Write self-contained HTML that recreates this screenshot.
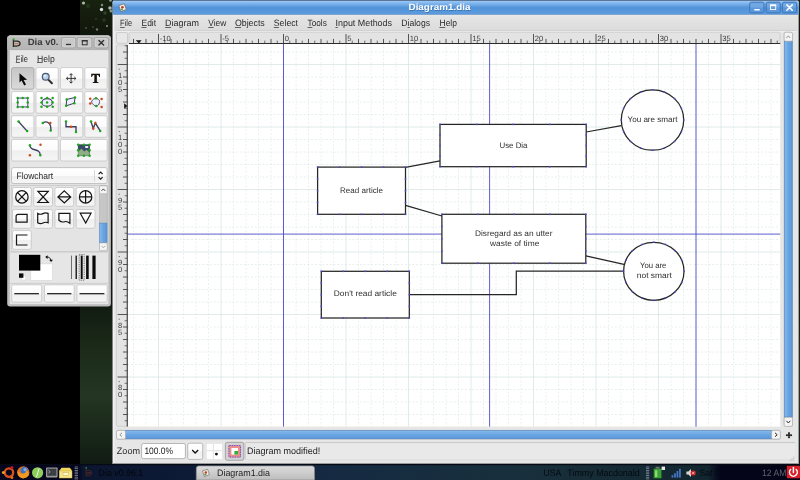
<!DOCTYPE html>
<html><head><meta charset="utf-8"><title>Dia</title>
<style>
html,body{margin:0;padding:0;background:#000;overflow:hidden;}
body{width:800px;height:480px;font-family:'Liberation Sans', sans-serif;}
svg{display:block;position:absolute;left:0;top:0;}
svg text{font-family:'Liberation Sans', sans-serif;}
</style></head><body>
<svg width="800" height="480" viewBox="0 0 800 480" text-rendering="geometricPrecision">
<defs>
<filter id="soft" x="0" y="0" width="800" height="480" filterUnits="userSpaceOnUse" color-interpolation-filters="sRGB"><feGaussianBlur stdDeviation="0.32"/></filter>
<linearGradient id="gTitle" x1="0" y1="0" x2="0" y2="1">
 <stop offset="0" stop-color="#5c7594"/><stop offset="0.055" stop-color="#5c7594"/>
 <stop offset="0.075" stop-color="#98c8f8"/><stop offset="0.3" stop-color="#74ace7"/>
 <stop offset="0.53" stop-color="#5092d8"/><stop offset="0.62" stop-color="#5596db"/>
 <stop offset="0.915" stop-color="#5a9add"/><stop offset="0.93" stop-color="#3b78be"/><stop offset="1" stop-color="#3b78be"/>
</linearGradient>
 <linearGradient id="gMenu" x1="0" y1="0" x2="0" y2="1">
 <stop offset="0" stop-color="#e9e9e9"/><stop offset="0.15" stop-color="#e4e4e4"/><stop offset="1" stop-color="#dcdcdc"/>
</linearGradient>
<linearGradient id="gTB" x1="0" y1="0" x2="0" y2="1">
 <stop offset="0" stop-color="#bebebe"/><stop offset="1" stop-color="#b6b6b6"/>
</linearGradient>
<linearGradient id="gBtn" x1="0" y1="0" x2="0" y2="1">
 <stop offset="0" stop-color="#ffffff"/><stop offset="0.5" stop-color="#fbfbfb"/>
 <stop offset="0.52" stop-color="#efefef"/><stop offset="1" stop-color="#f6f6f6"/>
</linearGradient>
<linearGradient id="gBtnSel" x1="0" y1="0" x2="0" y2="1">
 <stop offset="0" stop-color="#c6c6c6"/><stop offset="1" stop-color="#dadada"/>
</linearGradient>
<linearGradient id="gBlueH" x1="0" y1="0" x2="0" y2="1">
 <stop offset="0" stop-color="#86baec"/><stop offset="0.5" stop-color="#69a4e2"/><stop offset="1" stop-color="#5b99dc"/>
</linearGradient>
<linearGradient id="gBlueV" x1="0" y1="0" x2="1" y2="0">
 <stop offset="0" stop-color="#86baec"/><stop offset="0.5" stop-color="#69a4e2"/><stop offset="1" stop-color="#5b99dc"/>
</linearGradient>
<linearGradient id="gForest" x1="0" y1="0" x2="0" y2="1">
 <stop offset="0" stop-color="#18220f"/><stop offset="0.08" stop-color="#10160c"/>
 <stop offset="0.6" stop-color="#0c120c"/><stop offset="0.75" stop-color="#1c2b1a"/>
 <stop offset="0.85" stop-color="#243623"/><stop offset="1" stop-color="#101a12"/>
</linearGradient>
<linearGradient id="gTask" x1="0" y1="0" x2="1" y2="0">
 <stop offset="0" stop-color="#05061e"/><stop offset="0.098" stop-color="#05061e"/>
 <stop offset="0.104" stop-color="#0b1530"/><stop offset="0.24" stop-color="#0d1b36"/>
 <stop offset="0.4" stop-color="#152a42"/><stop offset="0.66" stop-color="#18303c"/>
 <stop offset="0.885" stop-color="#12262f"/><stop offset="0.9" stop-color="#05051a"/><stop offset="1" stop-color="#05051a"/>
</linearGradient>
<linearGradient id="gTaskBtn" x1="0" y1="0" x2="0" y2="1">
 <stop offset="0" stop-color="#dcdcdc"/><stop offset="1" stop-color="#bdbdbd"/>
</linearGradient>
</defs>
<g filter="url(#soft)">
<rect x="0" y="0" width="800" height="480" fill="#000"/>
<rect x="80" y="0" width="720" height="466" fill="url(#gForest)"/>
<circle cx="83.5" cy="3" r="1.6" fill="#cfe0d0" opacity="0.8"/>
<circle cx="101.5" cy="9.5" r="1.7" fill="#e8f0f4" opacity="0.9"/>
<circle cx="102" cy="5" r="1.2" fill="#a8c0b8" opacity="0.7"/>
<circle cx="110" cy="8" r="1.8" fill="#c8d8d8" opacity="0.8"/>
<circle cx="111" cy="11" r="1.5" fill="#b0c4c0" opacity="0.7"/>
<circle cx="107" cy="26" r="1.0" fill="#b8c8c0" opacity="0.7"/>
<circle cx="97" cy="29.5" r="1.2" fill="#a8b8ac" opacity="0.6"/>
<circle cx="86" cy="28" r="0.9" fill="#6c8068" opacity="0.6"/>
<circle cx="93" cy="27" r="1.0" fill="#506848" opacity="0.6"/>
<circle cx="105" cy="13" r="1.8" fill="#3a5230" opacity="0.7"/>
<circle cx="104" cy="20" r="1.8" fill="#30442a" opacity="0.7"/>
<circle cx="96" cy="19" r="1.0" fill="#3c5034" opacity="0.6"/>
<circle cx="88" cy="6" r="2.2" fill="#243a1c" opacity="0.8"/>
<circle cx="110.5" cy="0.5" r="1.3" fill="#c0d0d0" opacity="0.7"/>
<rect x="0" y="465" width="800" height="15" fill="url(#gTask)"/>
<rect x="0" y="464" width="800" height="1.2" fill="#050a14"/>
<path d="M112.5,463.8 V3 Q112.5,0 115.5,0 H795.8 Q798.8,0 798.8,3 V463.8 Z" fill="#e6e6e6"/>
<path d="M112.5,14.8 V3 Q112.5,0 115.5,0 H795.8 Q798.8,0 798.8,3 V14.8 Z" fill="url(#gTitle)"/>
<rect x="113.0" y="14.8" width="1.4" height="449.0" fill="#f2f2f2"/>
<rect x="112.0" y="3" width="1" height="460.8" fill="#7c7f84"/>
<rect x="798.0999999999999" y="14.6" width="0.9" height="449.2" fill="#9a9a9a"/>
<rect x="112.5" y="463.0" width="686.3" height="1" fill="#9a9a9a"/>
<g transform="translate(117.8,3)"><path d="M1,2.5 L6.5,0.8 L8.5,6.5 L3,8.6 Z" fill="#f2efe6" stroke="#6a665c" stroke-width="0.7"/><circle cx="4.6" cy="4.2" r="1.3" fill="#c0392b"/><rect x="3" y="5.6" width="2" height="1.6" fill="#5a8a4a"/></g>
<text x="408.5" y="10.4" font-size="9" fill="#2c5a94" font-weight="bold" textLength="62" lengthAdjust="spacingAndGlyphs" opacity="0.55" transform="translate(0.5,0.7)">Diagram1.dia</text>
<text x="408.5" y="10.4" font-size="9" fill="#ffffff" font-weight="bold" textLength="62" lengthAdjust="spacingAndGlyphs" >Diagram1.dia</text>
<rect x="749.7" y="2.2" width="14.299999999999955" height="10.600000000000001" rx="1.6" fill="#5a97dc" stroke="#3a6fb0" stroke-width="0.8"/>
<rect x="750.4000000000001" y="2.9000000000000004" width="12.899999999999954" height="4.6000000000000005" rx="1" fill="#8fbdee" opacity="0.45"/>
<rect x="766.2" y="2.2" width="14.099999999999909" height="10.600000000000001" rx="1.6" fill="#5a97dc" stroke="#3a6fb0" stroke-width="0.8"/>
<rect x="766.9000000000001" y="2.9000000000000004" width="12.699999999999909" height="4.6000000000000005" rx="1" fill="#8fbdee" opacity="0.45"/>
<rect x="782.4" y="2.2" width="14.200000000000045" height="10.600000000000001" rx="1.6" fill="#5a97dc" stroke="#3a6fb0" stroke-width="0.8"/>
<rect x="783.1" y="2.9000000000000004" width="12.800000000000045" height="4.6000000000000005" rx="1" fill="#8fbdee" opacity="0.45"/>
<rect x="754.3" y="9" width="5.4" height="1.5" fill="#fff"/>
<rect x="770.5" y="5" width="5.2" height="4.6" fill="none" stroke="#fff" stroke-width="0.9"/>
<rect x="770" y="4.5" width="6.2" height="1.6" fill="#fff"/>
<path d="M786.9,4.9 L792.2,10.2 M792.2,4.9 L786.9,10.2" stroke="#fff" stroke-width="1.6" stroke-linecap="round"/>
<rect x="114.4" y="14.8" width="683.5" height="15.7" fill="url(#gMenu)"/>
<rect x="115.5" y="30.4" width="680.3" height="0.6" fill="#c9c9c9"/>
<rect x="115.5" y="31" width="680.3" height="0.6" fill="#f6f6f6"/>
<text x="120.1" y="26.2" font-size="9.2" fill="#2a2a2a" textLength="11.9" lengthAdjust="spacingAndGlyphs" >File</text>
<rect x="120.1" y="27.2" width="4.6" height="0.7" fill="#2a2a2a"/>
<text x="141.5" y="26.2" font-size="9.2" fill="#2a2a2a" textLength="14.6" lengthAdjust="spacingAndGlyphs" >Edit</text>
<rect x="141.5" y="27.2" width="5.0" height="0.7" fill="#2a2a2a"/>
<text x="165.1" y="26.2" font-size="9.2" fill="#2a2a2a" textLength="33.8" lengthAdjust="spacingAndGlyphs" >Diagram</text>
<rect x="165.1" y="27.2" width="6.0" height="0.7" fill="#2a2a2a"/>
<text x="208.3" y="26.2" font-size="9.2" fill="#2a2a2a" textLength="18.0" lengthAdjust="spacingAndGlyphs" >View</text>
<rect x="208.3" y="27.2" width="5.3" height="0.7" fill="#2a2a2a"/>
<text x="234.9" y="26.2" font-size="9.2" fill="#2a2a2a" textLength="29.9" lengthAdjust="spacingAndGlyphs" >Objects</text>
<rect x="234.9" y="27.2" width="6.2" height="0.7" fill="#2a2a2a"/>
<text x="273.8" y="26.2" font-size="9.2" fill="#2a2a2a" textLength="24.2" lengthAdjust="spacingAndGlyphs" >Select</text>
<rect x="273.8" y="27.2" width="5.0" height="0.7" fill="#2a2a2a"/>
<text x="307.5" y="26.2" font-size="9.2" fill="#2a2a2a" textLength="19.3" lengthAdjust="spacingAndGlyphs" >Tools</text>
<rect x="307.5" y="27.2" width="4.8" height="0.7" fill="#2a2a2a"/>
<text x="335.5" y="26.2" font-size="9.2" fill="#2a2a2a" textLength="56.5" lengthAdjust="spacingAndGlyphs" >Input Methods</text>
<rect x="335.5" y="27.2" width="2.3" height="0.7" fill="#2a2a2a"/>
<text x="401.3" y="26.2" font-size="9.2" fill="#2a2a2a" textLength="28.7" lengthAdjust="spacingAndGlyphs" >Dialogs</text>
<rect x="407.6" y="27.2" width="2.2" height="0.7" fill="#2a2a2a"/>
<text x="439.5" y="26.2" font-size="9.2" fill="#2a2a2a" textLength="17.5" lengthAdjust="spacingAndGlyphs" >Help</text>
<rect x="439.5" y="27.2" width="5.8" height="0.7" fill="#2a2a2a"/>
<rect x="116.5" y="32.5" width="11" height="10.8" rx="1.4" fill="#e8e8e8" stroke="#c2c2c2" stroke-width="0.7"/>
<path d="M129,43.9 V34 Q129,32.2 131,32.2 H778 Q780.2,32.2 780.2,34 V43.9 Z" fill="#e3e3e3" stroke="#c4c4c4" stroke-width="0.6"/>
<path d="M127.8,45 H118.2 Q116.4,45 116.4,46.8 V424.6 Q116.4,426.4 118.2,426.4 H127.8 Z" fill="#e3e3e3" stroke="#c4c4c4" stroke-width="0.6"/>
<rect x="127.8" y="43.9" width="652.4000000000001" height="382.70000000000005" fill="#ffffff"/>
<g stroke="#d6e4e3" stroke-width="0.75" fill="none">
<path d="M133.50,43.9 V426.6" stroke-dasharray="1.9 1.85" stroke-dashoffset="0.9" stroke-opacity="0.75"/>
<path d="M146.00,43.9 V426.6" stroke-dasharray="1.9 1.85" stroke-dashoffset="0.9" stroke-opacity="0.75"/>
<path d="M158.50,43.9 V426.6"/>
<path d="M171.00,43.9 V426.6" stroke-dasharray="1.9 1.85" stroke-dashoffset="0.9" stroke-opacity="0.75"/>
<path d="M183.50,43.9 V426.6" stroke-dasharray="1.9 1.85" stroke-dashoffset="0.9" stroke-opacity="0.75"/>
<path d="M196.00,43.9 V426.6" stroke-dasharray="1.9 1.85" stroke-dashoffset="0.9" stroke-opacity="0.75"/>
<path d="M208.50,43.9 V426.6" stroke-dasharray="1.9 1.85" stroke-dashoffset="0.9" stroke-opacity="0.75"/>
<path d="M221.00,43.9 V426.6"/>
<path d="M233.50,43.9 V426.6" stroke-dasharray="1.9 1.85" stroke-dashoffset="0.9" stroke-opacity="0.75"/>
<path d="M246.00,43.9 V426.6" stroke-dasharray="1.9 1.85" stroke-dashoffset="0.9" stroke-opacity="0.75"/>
<path d="M258.50,43.9 V426.6" stroke-dasharray="1.9 1.85" stroke-dashoffset="0.9" stroke-opacity="0.75"/>
<path d="M271.00,43.9 V426.6" stroke-dasharray="1.9 1.85" stroke-dashoffset="0.9" stroke-opacity="0.75"/>
<path d="M283.50,43.9 V426.6"/>
<path d="M296.00,43.9 V426.6" stroke-dasharray="1.9 1.85" stroke-dashoffset="0.9" stroke-opacity="0.75"/>
<path d="M308.50,43.9 V426.6" stroke-dasharray="1.9 1.85" stroke-dashoffset="0.9" stroke-opacity="0.75"/>
<path d="M321.00,43.9 V426.6" stroke-dasharray="1.9 1.85" stroke-dashoffset="0.9" stroke-opacity="0.75"/>
<path d="M333.50,43.9 V426.6" stroke-dasharray="1.9 1.85" stroke-dashoffset="0.9" stroke-opacity="0.75"/>
<path d="M346.00,43.9 V426.6"/>
<path d="M358.50,43.9 V426.6" stroke-dasharray="1.9 1.85" stroke-dashoffset="0.9" stroke-opacity="0.75"/>
<path d="M371.00,43.9 V426.6" stroke-dasharray="1.9 1.85" stroke-dashoffset="0.9" stroke-opacity="0.75"/>
<path d="M383.50,43.9 V426.6" stroke-dasharray="1.9 1.85" stroke-dashoffset="0.9" stroke-opacity="0.75"/>
<path d="M396.00,43.9 V426.6" stroke-dasharray="1.9 1.85" stroke-dashoffset="0.9" stroke-opacity="0.75"/>
<path d="M408.50,43.9 V426.6"/>
<path d="M421.00,43.9 V426.6" stroke-dasharray="1.9 1.85" stroke-dashoffset="0.9" stroke-opacity="0.75"/>
<path d="M433.50,43.9 V426.6" stroke-dasharray="1.9 1.85" stroke-dashoffset="0.9" stroke-opacity="0.75"/>
<path d="M446.00,43.9 V426.6" stroke-dasharray="1.9 1.85" stroke-dashoffset="0.9" stroke-opacity="0.75"/>
<path d="M458.50,43.9 V426.6" stroke-dasharray="1.9 1.85" stroke-dashoffset="0.9" stroke-opacity="0.75"/>
<path d="M471.00,43.9 V426.6"/>
<path d="M483.50,43.9 V426.6" stroke-dasharray="1.9 1.85" stroke-dashoffset="0.9" stroke-opacity="0.75"/>
<path d="M496.00,43.9 V426.6" stroke-dasharray="1.9 1.85" stroke-dashoffset="0.9" stroke-opacity="0.75"/>
<path d="M508.50,43.9 V426.6" stroke-dasharray="1.9 1.85" stroke-dashoffset="0.9" stroke-opacity="0.75"/>
<path d="M521.00,43.9 V426.6" stroke-dasharray="1.9 1.85" stroke-dashoffset="0.9" stroke-opacity="0.75"/>
<path d="M533.50,43.9 V426.6"/>
<path d="M546.00,43.9 V426.6" stroke-dasharray="1.9 1.85" stroke-dashoffset="0.9" stroke-opacity="0.75"/>
<path d="M558.50,43.9 V426.6" stroke-dasharray="1.9 1.85" stroke-dashoffset="0.9" stroke-opacity="0.75"/>
<path d="M571.00,43.9 V426.6" stroke-dasharray="1.9 1.85" stroke-dashoffset="0.9" stroke-opacity="0.75"/>
<path d="M583.50,43.9 V426.6" stroke-dasharray="1.9 1.85" stroke-dashoffset="0.9" stroke-opacity="0.75"/>
<path d="M596.00,43.9 V426.6"/>
<path d="M608.50,43.9 V426.6" stroke-dasharray="1.9 1.85" stroke-dashoffset="0.9" stroke-opacity="0.75"/>
<path d="M621.00,43.9 V426.6" stroke-dasharray="1.9 1.85" stroke-dashoffset="0.9" stroke-opacity="0.75"/>
<path d="M633.50,43.9 V426.6" stroke-dasharray="1.9 1.85" stroke-dashoffset="0.9" stroke-opacity="0.75"/>
<path d="M646.00,43.9 V426.6" stroke-dasharray="1.9 1.85" stroke-dashoffset="0.9" stroke-opacity="0.75"/>
<path d="M658.50,43.9 V426.6"/>
<path d="M671.00,43.9 V426.6" stroke-dasharray="1.9 1.85" stroke-dashoffset="0.9" stroke-opacity="0.75"/>
<path d="M683.50,43.9 V426.6" stroke-dasharray="1.9 1.85" stroke-dashoffset="0.9" stroke-opacity="0.75"/>
<path d="M696.00,43.9 V426.6" stroke-dasharray="1.9 1.85" stroke-dashoffset="0.9" stroke-opacity="0.75"/>
<path d="M708.50,43.9 V426.6" stroke-dasharray="1.9 1.85" stroke-dashoffset="0.9" stroke-opacity="0.75"/>
<path d="M721.00,43.9 V426.6"/>
<path d="M733.50,43.9 V426.6" stroke-dasharray="1.9 1.85" stroke-dashoffset="0.9" stroke-opacity="0.75"/>
<path d="M746.00,43.9 V426.6" stroke-dasharray="1.9 1.85" stroke-dashoffset="0.9" stroke-opacity="0.75"/>
<path d="M758.50,43.9 V426.6" stroke-dasharray="1.9 1.85" stroke-dashoffset="0.9" stroke-opacity="0.75"/>
<path d="M771.00,43.9 V426.6" stroke-dasharray="1.9 1.85" stroke-dashoffset="0.9" stroke-opacity="0.75"/>
<path d="M127.8,52.00 H780.2" stroke-dasharray="1.9 1.85" stroke-dashoffset="0.4" stroke-opacity="0.8"/>
<path d="M127.8,64.50 H780.2"/>
<path d="M127.8,77.00 H780.2" stroke-dasharray="1.9 1.85" stroke-dashoffset="0.4" stroke-opacity="0.8"/>
<path d="M127.8,89.50 H780.2" stroke-dasharray="1.9 1.85" stroke-dashoffset="0.4" stroke-opacity="0.8"/>
<path d="M127.8,102.00 H780.2" stroke-dasharray="1.9 1.85" stroke-dashoffset="0.4" stroke-opacity="0.8"/>
<path d="M127.8,114.50 H780.2" stroke-dasharray="1.9 1.85" stroke-dashoffset="0.4" stroke-opacity="0.8"/>
<path d="M127.8,127.00 H780.2"/>
<path d="M127.8,139.50 H780.2" stroke-dasharray="1.9 1.85" stroke-dashoffset="0.4" stroke-opacity="0.8"/>
<path d="M127.8,152.00 H780.2" stroke-dasharray="1.9 1.85" stroke-dashoffset="0.4" stroke-opacity="0.8"/>
<path d="M127.8,164.50 H780.2" stroke-dasharray="1.9 1.85" stroke-dashoffset="0.4" stroke-opacity="0.8"/>
<path d="M127.8,177.00 H780.2" stroke-dasharray="1.9 1.85" stroke-dashoffset="0.4" stroke-opacity="0.8"/>
<path d="M127.8,189.50 H780.2"/>
<path d="M127.8,202.00 H780.2" stroke-dasharray="1.9 1.85" stroke-dashoffset="0.4" stroke-opacity="0.8"/>
<path d="M127.8,214.50 H780.2" stroke-dasharray="1.9 1.85" stroke-dashoffset="0.4" stroke-opacity="0.8"/>
<path d="M127.8,227.00 H780.2" stroke-dasharray="1.9 1.85" stroke-dashoffset="0.4" stroke-opacity="0.8"/>
<path d="M127.8,239.50 H780.2" stroke-dasharray="1.9 1.85" stroke-dashoffset="0.4" stroke-opacity="0.8"/>
<path d="M127.8,252.00 H780.2"/>
<path d="M127.8,264.50 H780.2" stroke-dasharray="1.9 1.85" stroke-dashoffset="0.4" stroke-opacity="0.8"/>
<path d="M127.8,277.00 H780.2" stroke-dasharray="1.9 1.85" stroke-dashoffset="0.4" stroke-opacity="0.8"/>
<path d="M127.8,289.50 H780.2" stroke-dasharray="1.9 1.85" stroke-dashoffset="0.4" stroke-opacity="0.8"/>
<path d="M127.8,302.00 H780.2" stroke-dasharray="1.9 1.85" stroke-dashoffset="0.4" stroke-opacity="0.8"/>
<path d="M127.8,314.50 H780.2"/>
<path d="M127.8,327.00 H780.2" stroke-dasharray="1.9 1.85" stroke-dashoffset="0.4" stroke-opacity="0.8"/>
<path d="M127.8,339.50 H780.2" stroke-dasharray="1.9 1.85" stroke-dashoffset="0.4" stroke-opacity="0.8"/>
<path d="M127.8,352.00 H780.2" stroke-dasharray="1.9 1.85" stroke-dashoffset="0.4" stroke-opacity="0.8"/>
<path d="M127.8,364.50 H780.2" stroke-dasharray="1.9 1.85" stroke-dashoffset="0.4" stroke-opacity="0.8"/>
<path d="M127.8,377.00 H780.2"/>
<path d="M127.8,389.50 H780.2" stroke-dasharray="1.9 1.85" stroke-dashoffset="0.4" stroke-opacity="0.8"/>
<path d="M127.8,402.00 H780.2" stroke-dasharray="1.9 1.85" stroke-dashoffset="0.4" stroke-opacity="0.8"/>
<path d="M127.8,414.50 H780.2" stroke-dasharray="1.9 1.85" stroke-dashoffset="0.4" stroke-opacity="0.8"/>
</g>
<g stroke="#4c4cc6" stroke-width="0.9">
<path d="M283.5,43.9 V426.6"/>
<path d="M489.6,43.9 V426.6"/>
<path d="M696.0,43.9 V426.6"/>
<path d="M127.8,234.1 H780.2"/>
</g>
<g stroke="#2e2e2e" stroke-width="0.8">
<path d="M133.50,38.9 V43.5"/>
<path d="M139.75,40.6 V43.5" stroke-opacity="0.8"/>
<path d="M146.00,38.9 V43.5"/>
<path d="M152.25,40.6 V43.5" stroke-opacity="0.8"/>
<path d="M158.50,34 V43.5"/>
<path d="M164.75,40.6 V43.5" stroke-opacity="0.8"/>
<path d="M171.00,38.9 V43.5"/>
<path d="M177.25,40.6 V43.5" stroke-opacity="0.8"/>
<path d="M183.50,38.9 V43.5"/>
<path d="M189.75,40.6 V43.5" stroke-opacity="0.8"/>
<path d="M196.00,38.9 V43.5"/>
<path d="M202.25,40.6 V43.5" stroke-opacity="0.8"/>
<path d="M208.50,38.9 V43.5"/>
<path d="M214.75,40.6 V43.5" stroke-opacity="0.8"/>
<path d="M221.00,34 V43.5"/>
<path d="M227.25,40.6 V43.5" stroke-opacity="0.8"/>
<path d="M233.50,38.9 V43.5"/>
<path d="M239.75,40.6 V43.5" stroke-opacity="0.8"/>
<path d="M246.00,38.9 V43.5"/>
<path d="M252.25,40.6 V43.5" stroke-opacity="0.8"/>
<path d="M258.50,38.9 V43.5"/>
<path d="M264.75,40.6 V43.5" stroke-opacity="0.8"/>
<path d="M271.00,38.9 V43.5"/>
<path d="M277.25,40.6 V43.5" stroke-opacity="0.8"/>
<path d="M283.50,34 V43.5"/>
<path d="M289.75,40.6 V43.5" stroke-opacity="0.8"/>
<path d="M296.00,38.9 V43.5"/>
<path d="M302.25,40.6 V43.5" stroke-opacity="0.8"/>
<path d="M308.50,38.9 V43.5"/>
<path d="M314.75,40.6 V43.5" stroke-opacity="0.8"/>
<path d="M321.00,38.9 V43.5"/>
<path d="M327.25,40.6 V43.5" stroke-opacity="0.8"/>
<path d="M333.50,38.9 V43.5"/>
<path d="M339.75,40.6 V43.5" stroke-opacity="0.8"/>
<path d="M346.00,34 V43.5"/>
<path d="M352.25,40.6 V43.5" stroke-opacity="0.8"/>
<path d="M358.50,38.9 V43.5"/>
<path d="M364.75,40.6 V43.5" stroke-opacity="0.8"/>
<path d="M371.00,38.9 V43.5"/>
<path d="M377.25,40.6 V43.5" stroke-opacity="0.8"/>
<path d="M383.50,38.9 V43.5"/>
<path d="M389.75,40.6 V43.5" stroke-opacity="0.8"/>
<path d="M396.00,38.9 V43.5"/>
<path d="M402.25,40.6 V43.5" stroke-opacity="0.8"/>
<path d="M408.50,34 V43.5"/>
<path d="M414.75,40.6 V43.5" stroke-opacity="0.8"/>
<path d="M421.00,38.9 V43.5"/>
<path d="M427.25,40.6 V43.5" stroke-opacity="0.8"/>
<path d="M433.50,38.9 V43.5"/>
<path d="M439.75,40.6 V43.5" stroke-opacity="0.8"/>
<path d="M446.00,38.9 V43.5"/>
<path d="M452.25,40.6 V43.5" stroke-opacity="0.8"/>
<path d="M458.50,38.9 V43.5"/>
<path d="M464.75,40.6 V43.5" stroke-opacity="0.8"/>
<path d="M471.00,34 V43.5"/>
<path d="M477.25,40.6 V43.5" stroke-opacity="0.8"/>
<path d="M483.50,38.9 V43.5"/>
<path d="M489.75,40.6 V43.5" stroke-opacity="0.8"/>
<path d="M496.00,38.9 V43.5"/>
<path d="M502.25,40.6 V43.5" stroke-opacity="0.8"/>
<path d="M508.50,38.9 V43.5"/>
<path d="M514.75,40.6 V43.5" stroke-opacity="0.8"/>
<path d="M521.00,38.9 V43.5"/>
<path d="M527.25,40.6 V43.5" stroke-opacity="0.8"/>
<path d="M533.50,34 V43.5"/>
<path d="M539.75,40.6 V43.5" stroke-opacity="0.8"/>
<path d="M546.00,38.9 V43.5"/>
<path d="M552.25,40.6 V43.5" stroke-opacity="0.8"/>
<path d="M558.50,38.9 V43.5"/>
<path d="M564.75,40.6 V43.5" stroke-opacity="0.8"/>
<path d="M571.00,38.9 V43.5"/>
<path d="M577.25,40.6 V43.5" stroke-opacity="0.8"/>
<path d="M583.50,38.9 V43.5"/>
<path d="M589.75,40.6 V43.5" stroke-opacity="0.8"/>
<path d="M596.00,34 V43.5"/>
<path d="M602.25,40.6 V43.5" stroke-opacity="0.8"/>
<path d="M608.50,38.9 V43.5"/>
<path d="M614.75,40.6 V43.5" stroke-opacity="0.8"/>
<path d="M621.00,38.9 V43.5"/>
<path d="M627.25,40.6 V43.5" stroke-opacity="0.8"/>
<path d="M633.50,38.9 V43.5"/>
<path d="M639.75,40.6 V43.5" stroke-opacity="0.8"/>
<path d="M646.00,38.9 V43.5"/>
<path d="M652.25,40.6 V43.5" stroke-opacity="0.8"/>
<path d="M658.50,34 V43.5"/>
<path d="M664.75,40.6 V43.5" stroke-opacity="0.8"/>
<path d="M671.00,38.9 V43.5"/>
<path d="M677.25,40.6 V43.5" stroke-opacity="0.8"/>
<path d="M683.50,38.9 V43.5"/>
<path d="M689.75,40.6 V43.5" stroke-opacity="0.8"/>
<path d="M696.00,38.9 V43.5"/>
<path d="M702.25,40.6 V43.5" stroke-opacity="0.8"/>
<path d="M708.50,38.9 V43.5"/>
<path d="M714.75,40.6 V43.5" stroke-opacity="0.8"/>
<path d="M721.00,34 V43.5"/>
<path d="M727.25,40.6 V43.5" stroke-opacity="0.8"/>
<path d="M733.50,38.9 V43.5"/>
<path d="M739.75,40.6 V43.5" stroke-opacity="0.8"/>
<path d="M746.00,38.9 V43.5"/>
<path d="M752.25,40.6 V43.5" stroke-opacity="0.8"/>
<path d="M758.50,38.9 V43.5"/>
<path d="M764.75,40.6 V43.5" stroke-opacity="0.8"/>
<path d="M771.00,38.9 V43.5"/>
<path d="M777.25,40.6 V43.5" stroke-opacity="0.8"/>
</g>
<rect x="129" y="43" width="651.2" height="1" fill="#2c2c2c"/>
<text x="159.8" y="41.0" font-size="7.6" fill="#3a3a3a" >-10</text>
<text x="222.3" y="41.0" font-size="7.6" fill="#3a3a3a" >-5</text>
<text x="284.8" y="41.0" font-size="7.6" fill="#3a3a3a" >0</text>
<text x="347.3" y="41.0" font-size="7.6" fill="#3a3a3a" >5</text>
<text x="409.8" y="41.0" font-size="7.6" fill="#3a3a3a" >10</text>
<text x="472.3" y="41.0" font-size="7.6" fill="#3a3a3a" >15</text>
<text x="534.8" y="41.0" font-size="7.6" fill="#3a3a3a" >20</text>
<text x="597.3" y="41.0" font-size="7.6" fill="#3a3a3a" >25</text>
<text x="659.8" y="41.0" font-size="7.6" fill="#3a3a3a" >30</text>
<text x="722.3" y="41.0" font-size="7.6" fill="#3a3a3a" >35</text>
<g stroke="#2e2e2e" stroke-width="0.8">
<path d="M124.6,45.75 H127.4" stroke-opacity="0.8"/>
<path d="M123,52.00 H127.4"/>
<path d="M124.6,58.25 H127.4" stroke-opacity="0.8"/>
<path d="M117.6,64.50 H127.4"/>
<path d="M124.6,70.75 H127.4" stroke-opacity="0.8"/>
<path d="M123,77.00 H127.4"/>
<path d="M124.6,83.25 H127.4" stroke-opacity="0.8"/>
<path d="M123,89.50 H127.4"/>
<path d="M124.6,95.75 H127.4" stroke-opacity="0.8"/>
<path d="M123,102.00 H127.4"/>
<path d="M124.6,108.25 H127.4" stroke-opacity="0.8"/>
<path d="M123,114.50 H127.4"/>
<path d="M124.6,120.75 H127.4" stroke-opacity="0.8"/>
<path d="M117.6,127.00 H127.4"/>
<path d="M124.6,133.25 H127.4" stroke-opacity="0.8"/>
<path d="M123,139.50 H127.4"/>
<path d="M124.6,145.75 H127.4" stroke-opacity="0.8"/>
<path d="M123,152.00 H127.4"/>
<path d="M124.6,158.25 H127.4" stroke-opacity="0.8"/>
<path d="M123,164.50 H127.4"/>
<path d="M124.6,170.75 H127.4" stroke-opacity="0.8"/>
<path d="M123,177.00 H127.4"/>
<path d="M124.6,183.25 H127.4" stroke-opacity="0.8"/>
<path d="M117.6,189.50 H127.4"/>
<path d="M124.6,195.75 H127.4" stroke-opacity="0.8"/>
<path d="M123,202.00 H127.4"/>
<path d="M124.6,208.25 H127.4" stroke-opacity="0.8"/>
<path d="M123,214.50 H127.4"/>
<path d="M124.6,220.75 H127.4" stroke-opacity="0.8"/>
<path d="M123,227.00 H127.4"/>
<path d="M124.6,233.25 H127.4" stroke-opacity="0.8"/>
<path d="M123,239.50 H127.4"/>
<path d="M124.6,245.75 H127.4" stroke-opacity="0.8"/>
<path d="M117.6,252.00 H127.4"/>
<path d="M124.6,258.25 H127.4" stroke-opacity="0.8"/>
<path d="M123,264.50 H127.4"/>
<path d="M124.6,270.75 H127.4" stroke-opacity="0.8"/>
<path d="M123,277.00 H127.4"/>
<path d="M124.6,283.25 H127.4" stroke-opacity="0.8"/>
<path d="M123,289.50 H127.4"/>
<path d="M124.6,295.75 H127.4" stroke-opacity="0.8"/>
<path d="M123,302.00 H127.4"/>
<path d="M124.6,308.25 H127.4" stroke-opacity="0.8"/>
<path d="M117.6,314.50 H127.4"/>
<path d="M124.6,320.75 H127.4" stroke-opacity="0.8"/>
<path d="M123,327.00 H127.4"/>
<path d="M124.6,333.25 H127.4" stroke-opacity="0.8"/>
<path d="M123,339.50 H127.4"/>
<path d="M124.6,345.75 H127.4" stroke-opacity="0.8"/>
<path d="M123,352.00 H127.4"/>
<path d="M124.6,358.25 H127.4" stroke-opacity="0.8"/>
<path d="M123,364.50 H127.4"/>
<path d="M124.6,370.75 H127.4" stroke-opacity="0.8"/>
<path d="M117.6,377.00 H127.4"/>
<path d="M124.6,383.25 H127.4" stroke-opacity="0.8"/>
<path d="M123,389.50 H127.4"/>
<path d="M124.6,395.75 H127.4" stroke-opacity="0.8"/>
<path d="M123,402.00 H127.4"/>
<path d="M124.6,408.25 H127.4" stroke-opacity="0.8"/>
<path d="M123,414.50 H127.4"/>
<path d="M124.6,420.75 H127.4" stroke-opacity="0.8"/>
</g>
<rect x="126.7" y="45" width="1.1" height="381.5" fill="#3a3a3a"/>
<rect x="118.7" y="68.70" width="1" height="0.9" fill="#444"/>
<text x="118.1" y="77.9" font-size="7.6" fill="#3a3a3a" >1</text>
<text x="118.1" y="84.9" font-size="7.6" fill="#3a3a3a" >0</text>
<text x="118.1" y="91.9" font-size="7.6" fill="#3a3a3a" >5</text>
<rect x="118.7" y="131.20" width="1" height="0.9" fill="#444"/>
<text x="118.1" y="140.4" font-size="7.6" fill="#3a3a3a" >1</text>
<text x="118.1" y="147.4" font-size="7.6" fill="#3a3a3a" >0</text>
<text x="118.1" y="154.4" font-size="7.6" fill="#3a3a3a" >0</text>
<rect x="118.7" y="193.70" width="1" height="0.9" fill="#444"/>
<text x="118.1" y="202.9" font-size="7.6" fill="#3a3a3a" >9</text>
<text x="118.1" y="209.9" font-size="7.6" fill="#3a3a3a" >5</text>
<rect x="118.7" y="256.20" width="1" height="0.9" fill="#444"/>
<text x="118.1" y="265.4" font-size="7.6" fill="#3a3a3a" >9</text>
<text x="118.1" y="272.4" font-size="7.6" fill="#3a3a3a" >0</text>
<rect x="118.7" y="318.70" width="1" height="0.9" fill="#444"/>
<text x="118.1" y="327.9" font-size="7.6" fill="#3a3a3a" >8</text>
<text x="118.1" y="334.9" font-size="7.6" fill="#3a3a3a" >5</text>
<rect x="118.7" y="381.20" width="1" height="0.9" fill="#444"/>
<text x="118.1" y="390.4" font-size="7.6" fill="#3a3a3a" >8</text>
<text x="118.1" y="397.4" font-size="7.6" fill="#3a3a3a" >0</text>
<path d="M135.8,40.2 H141.6 L138.7,43.3 Z" fill="#111"/>
<path d="M124.2,103.2 V108.8 L127.3,106 Z" fill="#111"/>
<g fill="#ffffff" stroke="#262626" stroke-width="1.25" stroke-linejoin="miter">
<path d="M405.5,167.3 L440,160.8" fill="none"/>
<path d="M405.5,205.3 L441.9,216" fill="none"/>
<path d="M586.2,132 L621.3,125.7" fill="none"/>
<path d="M585.8,255.8 L624,264.4" fill="none"/>
<path d="M409.3,294.7 H516.3 V271 H623.5" fill="none"/>
<rect x="440" y="124.4" width="146.2" height="42.3"/>
<rect x="317.6" y="167.1" width="87.9" height="47.2"/>
<rect x="441.9" y="214.3" width="143.9" height="48.9"/>
<rect x="321.3" y="271.3" width="88" height="46.7"/>
<ellipse cx="652.5" cy="120" rx="31.2" ry="30.2"/>
<ellipse cx="653.8" cy="271.25" rx="30.2" ry="29"/>
</g>
<g fill="#4a4ae0" opacity="0.9">
<rect x="439.20" y="123.60" width="1.6" height="1.6"/>
<rect x="439.20" y="165.90" width="1.6" height="1.6"/>
<rect x="475.75" y="123.60" width="1.6" height="1.6"/>
<rect x="475.75" y="165.90" width="1.6" height="1.6"/>
<rect x="512.30" y="123.60" width="1.6" height="1.6"/>
<rect x="512.30" y="165.90" width="1.6" height="1.6"/>
<rect x="548.85" y="123.60" width="1.6" height="1.6"/>
<rect x="548.85" y="165.90" width="1.6" height="1.6"/>
<rect x="585.40" y="123.60" width="1.6" height="1.6"/>
<rect x="585.40" y="165.90" width="1.6" height="1.6"/>
<rect x="439.20" y="134.17" width="1.6" height="1.6"/>
<rect x="585.40" y="134.17" width="1.6" height="1.6"/>
<rect x="439.20" y="144.75" width="1.6" height="1.6"/>
<rect x="585.40" y="144.75" width="1.6" height="1.6"/>
<rect x="439.20" y="155.32" width="1.6" height="1.6"/>
<rect x="585.40" y="155.32" width="1.6" height="1.6"/>
<rect x="316.80" y="166.30" width="1.6" height="1.6"/>
<rect x="316.80" y="213.50" width="1.6" height="1.6"/>
<rect x="338.78" y="166.30" width="1.6" height="1.6"/>
<rect x="338.78" y="213.50" width="1.6" height="1.6"/>
<rect x="360.75" y="166.30" width="1.6" height="1.6"/>
<rect x="360.75" y="213.50" width="1.6" height="1.6"/>
<rect x="382.73" y="166.30" width="1.6" height="1.6"/>
<rect x="382.73" y="213.50" width="1.6" height="1.6"/>
<rect x="404.70" y="166.30" width="1.6" height="1.6"/>
<rect x="404.70" y="213.50" width="1.6" height="1.6"/>
<rect x="316.80" y="178.10" width="1.6" height="1.6"/>
<rect x="404.70" y="178.10" width="1.6" height="1.6"/>
<rect x="316.80" y="189.90" width="1.6" height="1.6"/>
<rect x="404.70" y="189.90" width="1.6" height="1.6"/>
<rect x="316.80" y="201.70" width="1.6" height="1.6"/>
<rect x="404.70" y="201.70" width="1.6" height="1.6"/>
<rect x="441.10" y="213.50" width="1.6" height="1.6"/>
<rect x="441.10" y="262.40" width="1.6" height="1.6"/>
<rect x="477.07" y="213.50" width="1.6" height="1.6"/>
<rect x="477.07" y="262.40" width="1.6" height="1.6"/>
<rect x="513.05" y="213.50" width="1.6" height="1.6"/>
<rect x="513.05" y="262.40" width="1.6" height="1.6"/>
<rect x="549.03" y="213.50" width="1.6" height="1.6"/>
<rect x="549.03" y="262.40" width="1.6" height="1.6"/>
<rect x="585.00" y="213.50" width="1.6" height="1.6"/>
<rect x="585.00" y="262.40" width="1.6" height="1.6"/>
<rect x="441.10" y="225.72" width="1.6" height="1.6"/>
<rect x="585.00" y="225.72" width="1.6" height="1.6"/>
<rect x="441.10" y="237.95" width="1.6" height="1.6"/>
<rect x="585.00" y="237.95" width="1.6" height="1.6"/>
<rect x="441.10" y="250.18" width="1.6" height="1.6"/>
<rect x="585.00" y="250.18" width="1.6" height="1.6"/>
<rect x="320.50" y="270.50" width="1.6" height="1.6"/>
<rect x="320.50" y="317.20" width="1.6" height="1.6"/>
<rect x="342.50" y="270.50" width="1.6" height="1.6"/>
<rect x="342.50" y="317.20" width="1.6" height="1.6"/>
<rect x="364.50" y="270.50" width="1.6" height="1.6"/>
<rect x="364.50" y="317.20" width="1.6" height="1.6"/>
<rect x="386.50" y="270.50" width="1.6" height="1.6"/>
<rect x="386.50" y="317.20" width="1.6" height="1.6"/>
<rect x="408.50" y="270.50" width="1.6" height="1.6"/>
<rect x="408.50" y="317.20" width="1.6" height="1.6"/>
<rect x="320.50" y="282.18" width="1.6" height="1.6"/>
<rect x="408.50" y="282.18" width="1.6" height="1.6"/>
<rect x="320.50" y="293.85" width="1.6" height="1.6"/>
<rect x="408.50" y="293.85" width="1.6" height="1.6"/>
<rect x="320.50" y="305.53" width="1.6" height="1.6"/>
<rect x="408.50" y="305.53" width="1.6" height="1.6"/>
<rect x="682.90" y="119.20" width="1.6" height="1.6"/>
<rect x="680.53" y="130.76" width="1.6" height="1.6"/>
<rect x="673.76" y="140.55" width="1.6" height="1.6"/>
<rect x="663.64" y="147.10" width="1.6" height="1.6"/>
<rect x="651.70" y="149.40" width="1.6" height="1.6"/>
<rect x="639.76" y="147.10" width="1.6" height="1.6"/>
<rect x="629.64" y="140.55" width="1.6" height="1.6"/>
<rect x="622.87" y="130.76" width="1.6" height="1.6"/>
<rect x="620.50" y="119.20" width="1.6" height="1.6"/>
<rect x="622.87" y="107.64" width="1.6" height="1.6"/>
<rect x="629.64" y="97.85" width="1.6" height="1.6"/>
<rect x="639.76" y="91.30" width="1.6" height="1.6"/>
<rect x="651.70" y="89.00" width="1.6" height="1.6"/>
<rect x="663.64" y="91.30" width="1.6" height="1.6"/>
<rect x="673.76" y="97.85" width="1.6" height="1.6"/>
<rect x="680.53" y="107.64" width="1.6" height="1.6"/>
<rect x="683.20" y="270.45" width="1.6" height="1.6"/>
<rect x="680.90" y="281.55" width="1.6" height="1.6"/>
<rect x="674.35" y="290.96" width="1.6" height="1.6"/>
<rect x="664.56" y="297.24" width="1.6" height="1.6"/>
<rect x="653.00" y="299.45" width="1.6" height="1.6"/>
<rect x="641.44" y="297.24" width="1.6" height="1.6"/>
<rect x="631.65" y="290.96" width="1.6" height="1.6"/>
<rect x="625.10" y="281.55" width="1.6" height="1.6"/>
<rect x="622.80" y="270.45" width="1.6" height="1.6"/>
<rect x="625.10" y="259.35" width="1.6" height="1.6"/>
<rect x="631.65" y="249.94" width="1.6" height="1.6"/>
<rect x="641.44" y="243.66" width="1.6" height="1.6"/>
<rect x="653.00" y="241.45" width="1.6" height="1.6"/>
<rect x="664.56" y="243.66" width="1.6" height="1.6"/>
<rect x="674.35" y="249.94" width="1.6" height="1.6"/>
<rect x="680.90" y="259.35" width="1.6" height="1.6"/>
</g>
<text x="499.5" y="147.6" font-size="8" fill="#2e2e2e" textLength="28" lengthAdjust="spacingAndGlyphs" >Use Dia</text>
<text x="340" y="192.6" font-size="8" fill="#2e2e2e" textLength="43" lengthAdjust="spacingAndGlyphs" >Read article</text>
<text x="475" y="235.8" font-size="8" fill="#2e2e2e" textLength="77.5" lengthAdjust="spacingAndGlyphs" >Disregard as an utter</text>
<text x="490" y="245.6" font-size="8" fill="#2e2e2e" textLength="49.3" lengthAdjust="spacingAndGlyphs" >waste of time</text>
<text x="333.8" y="296.4" font-size="8" fill="#2e2e2e" textLength="63" lengthAdjust="spacingAndGlyphs" >Don't read article</text>
<text x="627.5" y="121.8" font-size="8" fill="#2e2e2e" textLength="50" lengthAdjust="spacingAndGlyphs" >You are smart</text>
<text x="640" y="267.6" font-size="8" fill="#2e2e2e" textLength="26.3" lengthAdjust="spacingAndGlyphs" >You are</text>
<text x="636.8" y="277.6" font-size="8" fill="#2e2e2e" textLength="35" lengthAdjust="spacingAndGlyphs" >not smart</text>
<rect x="784.2" y="32.3" width="8.3" height="394.2" rx="1.5" fill="#cfcfcf" stroke="#a9a9a9" stroke-width="0.6"/>
<rect x="784.5" y="41.3" width="7.7" height="375.6" fill="url(#gBlueV)" stroke="#4a83c4" stroke-width="0.6"/>
<rect x="784.2" y="32.3" width="8.3" height="8.9" rx="1.5" fill="#f4f4f4" stroke="#a9a9a9" stroke-width="0.6"/>
<rect x="784.2" y="417.4" width="8.3" height="9" rx="1.5" fill="#f4f4f4" stroke="#a9a9a9" stroke-width="0.6"/>
<path d="M786.4,38 L788.35,35.8 L790.3,38" fill="none" stroke="#8a8a8a" stroke-width="0.9"/>
<path d="M786.4,420.8 L788.35,423 L790.3,420.8" fill="none" stroke="#2a2a2a" stroke-width="1"/>
<rect x="116.5" y="430.4" width="663.8" height="8.7" rx="1.5" fill="#cfcfcf" stroke="#a9a9a9" stroke-width="0.6"/>
<rect x="125.6" y="430.7" width="646" height="8.1" fill="url(#gBlueH)" stroke="#4a83c4" stroke-width="0.6"/>
<rect x="116.5" y="430.4" width="9" height="8.7" rx="1.5" fill="#f4f4f4" stroke="#a9a9a9" stroke-width="0.6"/>
<rect x="771.6" y="430.4" width="8.7" height="8.7" rx="1.5" fill="#f4f4f4" stroke="#a9a9a9" stroke-width="0.6"/>
<path d="M122,432.8 L119.8,434.75 L122,436.7" fill="none" stroke="#8a8a8a" stroke-width="0.9"/>
<path d="M775,432.8 L777.2,434.75 L775,436.7" fill="none" stroke="#2a2a2a" stroke-width="1"/>
<g fill="#111" stroke="#111" stroke-width="0.9"><path d="M786.4,435.2 H791.6 M789,432.6 V437.8" fill="none" stroke-width="1.3"/><path d="M789,431.9 L790.2,433.4 H787.8 Z M789,438.5 L790.2,437 H787.8 Z M785.7,435.2 L787.2,434 V436.4 Z M792.3,435.2 L790.8,434 V436.4 Z" stroke="none"/></g>
<text x="116.8" y="454.2" font-size="9.3" fill="#2a2a2a" textLength="23.2" lengthAdjust="spacingAndGlyphs" >Zoom</text>
<rect x="141.6" y="443.5" width="43.8" height="15.1" rx="1.8" fill="#ffffff" stroke="#9c9c9c" stroke-width="0.7"/>
<text x="144.4" y="454.2" font-size="9.3" fill="#222" textLength="28.6" lengthAdjust="spacingAndGlyphs" >100.0%</text>
<rect x="187.7" y="443.2" width="15" height="16.2" rx="1.8" fill="url(#gBtn)" stroke="#a4a4a4" stroke-width="0.7"/>
<path d="M192.2,450 L195.2,453 L198.2,450" fill="none" stroke="#111" stroke-width="1.3"/>
<rect x="206.8" y="443.9" width="15.2" height="15.1" fill="#ffffff"/>
<path d="M213.4,443.9 V459 M206.8,450.6 H222" stroke="#e6e6e6" stroke-width="1.3"/>
<circle cx="216.4" cy="454.1" r="1.45" fill="#111"/>
<rect x="225.4" y="442.3" width="18.4" height="18" rx="1.8" fill="#d2d2d2" stroke="#8e8e8e" stroke-width="0.7"/>
<rect x="228.4" y="445" width="12.6" height="12.6" rx="1" fill="#ee8c8c"/>
<rect x="228.9" y="445.5" width="11.6" height="11.6" rx="0.6" fill="none" stroke="#5a5ae6" stroke-width="1" stroke-dasharray="1.3 1.1"/>
<rect x="231.4" y="448" width="6.6" height="6.6" fill="#ffffff"/>
<rect x="234.4" y="451" width="3.6" height="3.6" fill="#2fae3a"/>
<rect x="245.2" y="442.6" width="550.3" height="17.2" rx="1" fill="#e9e9e9" stroke="#b9b9b9" stroke-width="0.7"/>
<path d="M245.5,459.9 H795.6 V442.8" fill="none" stroke="#f8f8f8" stroke-width="0.7"/>
<text x="246.9" y="454.2" font-size="9.3" fill="#222" textLength="73.3" lengthAdjust="spacingAndGlyphs" >Diagram modified!</text>
<g fill="#bdbdbd"><rect x="793.2" y="456.6" width="1" height="1"/><rect x="791.4" y="458.2" width="1" height="1"/><rect x="793.2" y="458.2" width="1" height="1"/><rect x="789.6" y="459.8" width="1" height="1"/><rect x="791.4" y="459.8" width="1" height="1"/><rect x="793.2" y="459.8" width="1" height="1"/></g>
<rect x="7.2" y="35.6" width="103.7" height="270.9" rx="3" fill="#bdbdbd"/>
<path d="M7.2,49.4 V38.6 Q7.2,35.6 10.2,35.6 H107.9 Q110.9,35.6 110.9,38.6 V49.4 Z" fill="url(#gTB)"/>
<rect x="9.2" y="35.6" width="99.7" height="0.8" fill="#e4e4e4" opacity="0.9"/>
<rect x="9.8" y="49.8" width="98.6" height="254.4" fill="#e6e6e6"/>
<rect x="9.8" y="49.4" width="98.6" height="0.7" fill="#a8a8a8"/>
<g transform="translate(12,38)"><path d="M1.4,1.6 V9 M1.4,3.2 H5 Q8.1,3.4 8.1,5.6 Q8.1,7.8 5,8 H1.4" fill="none" stroke="#2c2824" stroke-width="1.25"/><circle cx="1.6" cy="1.3" r="1" fill="#22b022"/><path d="M2,5.6 H6.6" stroke="#c8703c" stroke-width="0.9"/></g>
<text x="27.7" y="45.0" font-size="9" fill="#3a3a3a" font-weight="bold" textLength="30.8" lengthAdjust="spacingAndGlyphs" >Dia v0.</text>
<rect x="61.6" y="37.6" width="13.999999999999993" height="10.199999999999996" rx="1.5" fill="#c9c9c9" stroke="#969696" stroke-width="0.8"/>
<rect x="62.4" y="38.4" width="12.399999999999993" height="8.599999999999996" rx="1" fill="none" stroke="#dedede" stroke-width="0.6"/>
<rect x="77.3" y="37.6" width="14.400000000000006" height="10.199999999999996" rx="1.5" fill="#c9c9c9" stroke="#969696" stroke-width="0.8"/>
<rect x="78.1" y="38.4" width="12.800000000000006" height="8.599999999999996" rx="1" fill="none" stroke="#dedede" stroke-width="0.6"/>
<rect x="94.2" y="37.6" width="14.099999999999994" height="10.199999999999996" rx="1.5" fill="#c9c9c9" stroke="#969696" stroke-width="0.8"/>
<rect x="95.0" y="38.4" width="12.499999999999995" height="8.599999999999996" rx="1" fill="none" stroke="#dedede" stroke-width="0.6"/>
<rect x="66" y="43.8" width="5" height="1.3" fill="#333"/>
<rect x="82.3" y="40.6" width="4.8" height="4.2" fill="none" stroke="#333" stroke-width="1"/><rect x="81.8" y="40.1" width="5.8" height="1.4" fill="#333"/>
<path d="M98.9,40.4 L103.6,45.1 M103.6,40.4 L98.9,45.1" stroke="#333" stroke-width="1.4" stroke-linecap="round"/>
<text x="15.8" y="61.6" font-size="9.2" fill="#2a2a2a" textLength="12.1" lengthAdjust="spacingAndGlyphs" >File</text>
<rect x="15.8" y="62.3" width="4.2" height="0.7" fill="#2a2a2a"/>
<text x="37.0" y="61.6" font-size="9.2" fill="#2a2a2a" textLength="17.8" lengthAdjust="spacingAndGlyphs" >Help</text>
<rect x="37.0" y="62.3" width="5.6" height="0.7" fill="#2a2a2a"/>
<rect x="11.5" y="67.6" width="22.40" height="21.60" rx="1.8" fill="url(#gBtnSel)" stroke="#a2a2a2" stroke-width="0.8"/>
<rect x="35.9" y="67.6" width="22.40" height="21.60" rx="1.8" fill="url(#gBtn)" stroke="#c4c4c4" stroke-width="0.8"/>
<rect x="60.4" y="67.6" width="22.40" height="21.60" rx="1.8" fill="url(#gBtn)" stroke="#c4c4c4" stroke-width="0.8"/>
<rect x="84.8" y="67.6" width="22.40" height="21.60" rx="1.8" fill="url(#gBtn)" stroke="#c4c4c4" stroke-width="0.8"/>
<rect x="11.5" y="91.6" width="22.40" height="21.60" rx="1.8" fill="url(#gBtn)" stroke="#c4c4c4" stroke-width="0.8"/>
<rect x="35.9" y="91.6" width="22.40" height="21.60" rx="1.8" fill="url(#gBtn)" stroke="#c4c4c4" stroke-width="0.8"/>
<rect x="60.4" y="91.6" width="22.40" height="21.60" rx="1.8" fill="url(#gBtn)" stroke="#c4c4c4" stroke-width="0.8"/>
<rect x="84.8" y="91.6" width="22.40" height="21.60" rx="1.8" fill="url(#gBtn)" stroke="#c4c4c4" stroke-width="0.8"/>
<rect x="11.5" y="115.7" width="22.40" height="21.60" rx="1.8" fill="url(#gBtn)" stroke="#c4c4c4" stroke-width="0.8"/>
<rect x="35.9" y="115.7" width="22.40" height="21.60" rx="1.8" fill="url(#gBtn)" stroke="#c4c4c4" stroke-width="0.8"/>
<rect x="60.4" y="115.7" width="22.40" height="21.60" rx="1.8" fill="url(#gBtn)" stroke="#c4c4c4" stroke-width="0.8"/>
<rect x="84.8" y="115.7" width="22.40" height="21.60" rx="1.8" fill="url(#gBtn)" stroke="#c4c4c4" stroke-width="0.8"/>
<rect x="11.5" y="139.4" width="46.80" height="21.60" rx="1.8" fill="url(#gBtn)" stroke="#c4c4c4" stroke-width="0.8"/>
<rect x="60.4" y="139.4" width="46.80" height="21.60" rx="1.8" fill="url(#gBtn)" stroke="#c4c4c4" stroke-width="0.8"/>
<path d="M19.5,73.19999999999999 L19.5,82.39999999999999 L21.599999999999998,80.49999999999999 L24.2,85.39999999999999 L26.0,84.39999999999999 L23.599999999999998,79.89999999999999 L27.1,79.69999999999999 Z" fill="#0a0a0a"/>
<path d="M48.3,79.6 L51.89999999999999,83.3" stroke="#2b2b2b" stroke-width="2" stroke-linecap="round"/>
<circle cx="45.699999999999996" cy="76.69999999999999" r="3.4" fill="#b8d0ea" stroke="#485a70" stroke-width="1.2"/>
<circle cx="44.99999999999999" cy="75.89999999999999" r="1.2" fill="#e6f0fc" opacity="0.9"/>
<g stroke="#303030" stroke-width="0.95" fill="none"><path d="M66.5,78.39999999999999 H75.69999999999999 M71.1,73.8 V82.99999999999999"/><path d="M69.6,75.19999999999999 L71.1,73.6 L72.6,75.19999999999999 M69.6,81.6 L71.1,83.19999999999999 L72.6,81.6 M67.89999999999999,76.89999999999999 L66.3,78.39999999999999 L67.89999999999999,79.89999999999999 M74.3,76.89999999999999 L75.89999999999999,78.39999999999999 L74.3,79.89999999999999"/></g>
<path transform="translate(95.60,78.40)" d="M-4.4,-4.7 H4.4 V-1.5 H3.6 Q3.4,-3.4 1.8,-3.5 H1.25 V3.0 Q1.25,3.7 2.9,3.8 V4.5 H-2.9 V3.8 Q-1.25,3.7 -1.25,3.0 V-3.5 H-1.8 Q-3.4,-3.4 -3.6,-1.5 H-4.4 Z" fill="#17120a"/>
<rect x="17.7" y="98.1" width="10" height="8.8" fill="#fafaff" stroke="#7474a2" stroke-width="1.3"/>
<circle cx="17.70" cy="98.10" r="1.25" fill="#1aa81a"/>
<circle cx="17.70" cy="102.50" r="1.25" fill="#1aa81a"/>
<circle cx="17.70" cy="106.90" r="1.25" fill="#1aa81a"/>
<circle cx="22.70" cy="98.10" r="1.25" fill="#1aa81a"/>
<circle cx="22.70" cy="106.90" r="1.25" fill="#1aa81a"/>
<circle cx="27.70" cy="98.10" r="1.25" fill="#1aa81a"/>
<circle cx="27.70" cy="102.50" r="1.25" fill="#1aa81a"/>
<circle cx="27.70" cy="106.90" r="1.25" fill="#1aa81a"/>
<ellipse cx="47.099999999999994" cy="102.39999999999999" rx="5.2" ry="3.8" fill="#eef" stroke="#3e3e60" stroke-width="1.1"/>
<circle cx="41.50" cy="98.10" r="1.25" fill="#1aa81a"/>
<circle cx="41.50" cy="102.40" r="1.25" fill="#1aa81a"/>
<circle cx="41.50" cy="106.70" r="1.25" fill="#1aa81a"/>
<circle cx="47.10" cy="98.10" r="1.25" fill="#1aa81a"/>
<circle cx="47.10" cy="102.40" r="1.25" fill="#1aa81a"/>
<circle cx="47.10" cy="106.70" r="1.25" fill="#1aa81a"/>
<circle cx="52.70" cy="98.10" r="1.25" fill="#1aa81a"/>
<circle cx="52.70" cy="102.40" r="1.25" fill="#1aa81a"/>
<circle cx="52.70" cy="106.70" r="1.25" fill="#1aa81a"/>
<path d="M66.69999999999999,99.39999999999999 L75.0,97.49999999999999 L74.3,103.19999999999999 L66.19999999999999,105.8 Z" fill="#eef" stroke="#3e3e60" stroke-width="1"/>
<circle cx="66.70" cy="99.40" r="1.25" fill="#1aa81a"/>
<circle cx="75.00" cy="97.50" r="1.25" fill="#1aa81a"/>
<circle cx="74.30" cy="103.20" r="1.25" fill="#1aa81a"/>
<circle cx="66.20" cy="105.80" r="1.25" fill="#1aa81a"/>
<path d="M92.4,100.19999999999999 C95.0,96.89999999999999 101.0,98.89999999999999 99.4,102.89999999999999 C98.5,106.6 95.0,106.89999999999999 93.4,104.6 C91.4,102.89999999999999 91.0,101.39999999999999 92.4,100.19999999999999 Z" fill="#eef" stroke="#3e3e60" stroke-width="0.9"/>
<circle cx="90.20" cy="98.80" r="1.25" fill="#cc4a1a"/>
<circle cx="101.60" cy="99.00" r="1.25" fill="#cc4a1a"/>
<circle cx="90.20" cy="103.60" r="1.25" fill="#cc4a1a"/>
<circle cx="101.60" cy="107.00" r="1.25" fill="#cc4a1a"/>
<circle cx="96.00" cy="98.20" r="1.25" fill="#1aa81a"/>
<circle cx="96.30" cy="106.00" r="1.25" fill="#1aa81a"/>
<path d="M18.5,121.5 L27.1,131.1" stroke="#3e3e60" stroke-width="1.35"/>
<circle cx="18.50" cy="121.50" r="1.25" fill="#1aa81a"/>
<circle cx="27.10" cy="131.10" r="1.25" fill="#1aa81a"/>
<path d="M42.8,123.1 C46.099999999999994,120.3 51.699999999999996,122.5 50.699999999999996,130.5" fill="none" stroke="#3e3e60" stroke-width="1.35"/>
<circle cx="42.80" cy="123.10" r="1.25" fill="#1aa81a"/>
<circle cx="50.30" cy="122.90" r="1.25" fill="#cc4a1a"/>
<circle cx="50.70" cy="130.50" r="1.25" fill="#1aa81a"/>
<path d="M66.0,121.5 V126.7 H76.0 V131.9" fill="none" stroke="#3e3e60" stroke-width="1.35"/>
<circle cx="66.00" cy="121.50" r="1.25" fill="#1aa81a"/>
<circle cx="71.00" cy="126.70" r="1.25" fill="#cc4a1a"/>
<circle cx="76.00" cy="131.90" r="1.25" fill="#1aa81a"/>
<path d="M91.0,121.5 L93.2,128.5 L95.4,123.1 L100.2,130.9" fill="none" stroke="#3e3e60" stroke-width="1.35"/>
<circle cx="91.00" cy="121.50" r="1.25" fill="#1aa81a"/>
<circle cx="93.20" cy="128.50" r="1.25" fill="#cc4a1a"/>
<circle cx="95.40" cy="123.10" r="1.25" fill="#cc4a1a"/>
<circle cx="100.20" cy="130.90" r="1.25" fill="#1aa81a"/>
<path d="M29.9,145.20000000000002 C29.9,152.20000000000002 40.3,147.20000000000002 40.3,155.20000000000002" fill="none" stroke="#3e3e60" stroke-width="1.35"/>
<circle cx="29.90" cy="145.20" r="1.25" fill="#1aa81a"/>
<circle cx="40.50" cy="144.80" r="1.25" fill="#cc4a1a"/>
<circle cx="29.90" cy="155.20" r="1.25" fill="#cc4a1a"/>
<circle cx="40.30" cy="155.20" r="1.25" fill="#1aa81a"/>
<rect x="78.2" y="144.8" width="11.4" height="11" fill="#3a4a6a" stroke="#27303c" stroke-width="0.6"/>
<path d="M78.2,155.8 V151.4 L81.39999999999999,148.8 L84.39999999999999,151.4 L86.39999999999999,149.8 L89.6,152.60000000000002 V155.8 Z" fill="#8fae86"/>
<rect x="85.2" y="146.00000000000003" width="3" height="2" fill="#e8ecf2"/>
<circle cx="78.20" cy="144.80" r="1.25" fill="#1aa81a"/>
<circle cx="78.20" cy="150.30" r="1.25" fill="#1aa81a"/>
<circle cx="78.20" cy="155.80" r="1.25" fill="#1aa81a"/>
<circle cx="83.90" cy="144.80" r="1.25" fill="#1aa81a"/>
<circle cx="83.90" cy="155.80" r="1.25" fill="#1aa81a"/>
<circle cx="89.60" cy="144.80" r="1.25" fill="#1aa81a"/>
<circle cx="89.60" cy="150.30" r="1.25" fill="#1aa81a"/>
<circle cx="89.60" cy="155.80" r="1.25" fill="#1aa81a"/>
<rect x="11.5" y="167.6" width="95.7" height="16" rx="2" fill="url(#gBtn)" stroke="#b4b4b4" stroke-width="0.8"/>
<text x="16.5" y="178.7" font-size="9.3" fill="#2a2a2a" textLength="36.7" lengthAdjust="spacingAndGlyphs" >Flowchart</text>
<rect x="94.3" y="170" width="0.7" height="11.4" fill="#c9c9c9"/>
<path d="M98.6,174.1 L100.6,172 L102.6,174.1 M98.6,177.1 L100.6,179.2 L102.6,177.1" fill="none" stroke="#1a1a1a" stroke-width="1.15"/>
<rect x="11.2" y="185.6" width="96.2" height="66" fill="#e4e4e4" stroke="#bdbdbd" stroke-width="0.6"/>
<rect x="12.5" y="187.5" width="18.80" height="18.80" rx="1.8" fill="url(#gBtn)" stroke="#c4c4c4" stroke-width="0.8"/>
<rect x="33.7" y="187.5" width="18.80" height="18.80" rx="1.8" fill="url(#gBtn)" stroke="#c4c4c4" stroke-width="0.8"/>
<rect x="54.9" y="187.5" width="18.80" height="18.80" rx="1.8" fill="url(#gBtn)" stroke="#c4c4c4" stroke-width="0.8"/>
<rect x="76.2" y="187.5" width="18.80" height="18.80" rx="1.8" fill="url(#gBtn)" stroke="#c4c4c4" stroke-width="0.8"/>
<rect x="12.5" y="209.5" width="18.80" height="18.80" rx="1.8" fill="url(#gBtn)" stroke="#c4c4c4" stroke-width="0.8"/>
<rect x="33.7" y="209.5" width="18.80" height="18.80" rx="1.8" fill="url(#gBtn)" stroke="#c4c4c4" stroke-width="0.8"/>
<rect x="54.9" y="209.5" width="18.80" height="18.80" rx="1.8" fill="url(#gBtn)" stroke="#c4c4c4" stroke-width="0.8"/>
<rect x="76.2" y="209.5" width="18.80" height="18.80" rx="1.8" fill="url(#gBtn)" stroke="#c4c4c4" stroke-width="0.8"/>
<rect x="12.5" y="230.6" width="18.80" height="18.80" rx="1.8" fill="url(#gBtn)" stroke="#c4c4c4" stroke-width="0.8"/>
<circle cx="21.9" cy="196.9" r="6.2" fill="none" stroke="#141414" stroke-width="1.2"/><path d="M17.5,192.5 L26.299999999999997,201.3 M26.299999999999997,192.5 L17.5,201.3" fill="none" stroke="#141414" stroke-width="1.2"/>
<path d="M37.9,191.3 H48.300000000000004 L37.9,202.5 H48.300000000000004 Z" fill="none" stroke="#141414" stroke-width="1.2" stroke-linejoin="miter"/>
<path d="M64.3,190.9 L70.7,196.9 L64.3,202.9 L57.9,196.9 Z M57.9,196.9 H70.7" fill="none" stroke="#141414" stroke-width="1.2"/>
<circle cx="85.60000000000001" cy="196.9" r="6.2" fill="none" stroke="#141414" stroke-width="1.2"/><path d="M79.4,196.9 H91.80000000000001 M85.60000000000001,190.70000000000002 V203.1" fill="none" stroke="#141414" stroke-width="1.2"/>
<path d="M16.1,222.20000000000002 V216.3 Q16.1,214.3 18.099999999999998,214.3 H27.1 V222.20000000000002 Z" fill="none" stroke="#141414" stroke-width="1.2"/>
<path d="M37.699999999999996,213.4 Q40.3,215.00000000000003 42.9,213.60000000000002 Q45.5,212.20000000000002 48.1,213.4 V222.8 Q45.5,221.60000000000002 42.9,223.00000000000003 Q40.3,224.4 37.699999999999996,222.8 Z" fill="none" stroke="#141414" stroke-width="1.2"/>
<path d="M58.9,213.4 H69.89999999999999 V223.20000000000002 Q66.89999999999999,220.8 64.3,221.8 Q61.5,222.6 58.9,220.20000000000002 Z" fill="none" stroke="#141414" stroke-width="1.2"/>
<path d="M80.2,213.20000000000002 H91.00000000000001 L85.7,223.0 Z" fill="none" stroke="#141414" stroke-width="1.2"/>
<path d="M27.5,235.0 H16.5 V245.0 H27.5" fill="none" stroke="#141414" stroke-width="1.2" stroke-width="1.2"/>
<rect x="99.5" y="185.9" width="7.7" height="64.8" rx="1.2" fill="#c6c6c6" stroke="#a9a9a9" stroke-width="0.5"/>
<rect x="99.7" y="223.1" width="7.3" height="19.4" fill="url(#gBlueV)" stroke="#4a83c4" stroke-width="0.5"/>
<rect x="99.5" y="185.9" width="7.7" height="7.8" rx="1.2" fill="#f4f4f4" stroke="#a9a9a9" stroke-width="0.5"/>
<rect x="99.5" y="242.9" width="7.7" height="7.8" rx="1.2" fill="#f4f4f4" stroke="#a9a9a9" stroke-width="0.5"/>
<path d="M101.6,190.8 L103.35,188.9 L105.1,190.8" fill="none" stroke="#2a2a2a" stroke-width="0.9"/>
<path d="M101.6,245.9 L103.35,247.8 L105.1,245.9" fill="none" stroke="#9a9a9a" stroke-width="0.8"/>
<rect x="30.8" y="263.9" width="21.7" height="16.5" fill="#ffffff" stroke="#d0d0d0" stroke-width="0.5"/>
<rect x="19" y="254.8" width="21.3" height="15.8" fill="#000000"/>
<rect x="21.4" y="275.6" width="4.4" height="4.4" fill="#ffffff" stroke="#cfcfcf" stroke-width="0.4"/>
<rect x="19" y="273.4" width="4.4" height="4.4" fill="#0a0a0a"/>
<path d="M46,257 Q50.6,256.4 51,261" fill="none" stroke="#111" stroke-width="0.9"/><path d="M45.2,257.1 L47.6,255.2 V259 Z M51.1,262 L49.2,259.8 H53 Z" fill="#111"/>
<rect x="71.12" y="255.6" width="0.55" height="23.4" fill="#0a0a0a"/>
<rect x="75.55" y="255.6" width="1.3" height="23.4" fill="#0a0a0a"/>
<rect x="80.75" y="255.6" width="1.9" height="23.4" fill="#0a0a0a"/>
<rect x="86.10" y="255.6" width="2.6" height="23.4" fill="#0a0a0a"/>
<rect x="92.40" y="255.6" width="3.2" height="23.4" fill="#0a0a0a"/>
<rect x="79.2" y="254.6" width="5" height="25.6" fill="none" stroke="#222" stroke-width="0.6" stroke-dasharray="1.2 1"/>
<rect x="9.6" y="282.9" width="99" height="0.7" fill="#c4c4c4"/>
<rect x="9.6" y="251.9" width="99" height="0.6" fill="#c9c9c9"/>
<rect x="11.7" y="284.8" width="30.00" height="17.40" rx="1.8" fill="url(#gBtn)" stroke="#c4c4c4" stroke-width="0.8"/>
<rect x="14.299999999999999" y="293.1" width="24.60" height="1.2" fill="#141414"/>
<rect x="44.5" y="284.8" width="29.70" height="17.40" rx="1.8" fill="url(#gBtn)" stroke="#c4c4c4" stroke-width="0.8"/>
<rect x="47.1" y="293.1" width="24.30" height="1.2" fill="#141414"/>
<rect x="76.9" y="284.8" width="30.30" height="17.40" rx="1.8" fill="url(#gBtn)" stroke="#c4c4c4" stroke-width="0.8"/>
<rect x="79.5" y="293.1" width="24.90" height="1.2" fill="#141414"/>
<circle cx="9" cy="472.6" r="4.2" fill="none" stroke="#d8501c" stroke-width="2.3"/><circle cx="3.4" cy="472.6" r="1.5" fill="#e8a020"/><circle cx="11.9" cy="467.6" r="1.5" fill="#c01818"/><circle cx="11.9" cy="477.6" r="1.5" fill="#e06a10"/>
<circle cx="23.3" cy="472.3" r="6.1" fill="#e2701a"/><circle cx="24.2" cy="470.6" r="3.5" fill="#3a70c4"/><circle cx="25" cy="469.6" r="1.6" fill="#7ab0ea"/><path d="M17.6,470 Q19.6,474.6 23.6,473.6 Q26.6,472.6 26,470 Q29.8,472 28.6,475.6 Q26,479 21.4,478 Q17,476 17.6,470 Z" fill="#f09a20"/>
<circle cx="37.6" cy="472.8" r="5.6" fill="#8ccf5a"/><path d="M36.4,477 Q38,473 39,468.6" stroke="#f2f8ea" stroke-width="1" fill="none"/>
<rect x="46" y="467.4" width="11.6" height="10" rx="0.8" fill="#9a9a9a"/><rect x="47.2" y="468.6" width="9.2" height="7.2" fill="#3a3f44"/><path d="M48.4,470.4 L50.2,471.8 L48.4,473.2" stroke="#d8d8d8" stroke-width="0.6" fill="none"/>
<path d="M59.4,470.6 L61.6,467.8 H69.8 L72,470.6 V478 H59.4 Z" fill="#f0d85a"/><rect x="59.4" y="471" width="12.6" height="7" fill="#f6e68a" stroke="#c8b040" stroke-width="0.5"/><rect x="63" y="472.8" width="5.4" height="2.4" fill="#fff8d0" stroke="#b8a040" stroke-width="0.4"/>
<g fill="#8a90a0"><rect x="74.6" y="466.6" width="3.4" height="0.8"/><rect x="74.6" y="468.3" width="3.4" height="0.8"/><rect x="74.6" y="470.0" width="3.4" height="0.8"/><rect x="74.6" y="471.7" width="3.4" height="0.8"/><rect x="74.6" y="473.4" width="3.4" height="0.8"/><rect x="74.6" y="475.1" width="3.4" height="0.8"/><rect x="74.6" y="476.8" width="3.4" height="0.8"/><rect x="74.6" y="478.5" width="3.4" height="0.8"/></g>
<path d="M86.2,468.6 V476.4 M86.2,470.4 H89 Q91.6,470.6 91.6,473 Q91.6,475.4 89,475.6 H86.2" fill="none" stroke="#5a2a1c" stroke-width="0.9" opacity="0.8"/><path d="M86.6,473 H90.6" stroke="#a03a20" stroke-width="0.9" opacity="0.8"/><circle cx="86.2" cy="467.9" r="0.8" fill="#2a9a2a"/>
<text x="98.6" y="476.3" font-size="9.3" fill="#03060c" textLength="44.6" lengthAdjust="spacingAndGlyphs" >Dia v0.96.1</text>
<path d="M196.3,480 V468.4 Q196.3,465.9 198.8,465.9 H312 Q314.5,465.9 314.5,468.4 V480 Z" fill="url(#gTaskBtn)" stroke="#8a8a8a" stroke-width="0.7"/>
<g transform="translate(201.6,468.6) scale(0.92)"><path d="M1,2.5 L6.5,0.8 L8.5,6.5 L3,8.6 Z" fill="#f2efe6" stroke="#6a665c" stroke-width="0.7"/><circle cx="4.6" cy="4.2" r="1.3" fill="#c0392b"/><rect x="3" y="5.6" width="2" height="1.6" fill="#5a8a4a"/></g>
<text x="217" y="476.3" font-size="9.3" fill="#1e1e1e" textLength="53" lengthAdjust="spacingAndGlyphs" >Diagram1.dia</text>
<text x="543.6" y="476.3" font-size="9.3" fill="#040a12" textLength="17.8" lengthAdjust="spacingAndGlyphs" >USA</text>
<text x="567.3" y="476.3" font-size="9.3" fill="#040a12" textLength="72.4" lengthAdjust="spacingAndGlyphs" >Timmy Macdonald</text>
<g fill="#8a90a0"><rect x="646" y="466.6" width="3.2" height="0.8"/><rect x="646" y="468.3" width="3.2" height="0.8"/><rect x="646" y="470.0" width="3.2" height="0.8"/><rect x="646" y="471.7" width="3.2" height="0.8"/><rect x="646" y="473.4" width="3.2" height="0.8"/><rect x="646" y="475.1" width="3.2" height="0.8"/><rect x="646" y="476.8" width="3.2" height="0.8"/><rect x="646" y="478.5" width="3.2" height="0.8"/></g>
<rect x="653.4" y="468.4" width="8.4" height="10.2" rx="0.8" fill="#3aa03a" stroke="#1c3c1c" stroke-width="0.8"/><rect x="655.6" y="466.8" width="4" height="1.8" fill="#6a7a6a"/><rect x="655" y="470.4" width="2.4" height="6.6" fill="#8ada70"/><rect x="661.6" y="466.6" width="3.4" height="3.4" fill="#e8e8e8"/>
<rect x="671.6" y="475.2" width="1.7" height="2.4" fill="#4a78c8"/>
<rect x="674.1" y="473.2" width="1.7" height="4.4" fill="#4a78c8"/>
<rect x="676.6" y="471.0" width="1.7" height="6.6" fill="#4a78c8"/>
<rect x="679.1" y="468.8" width="1.7" height="8.8" fill="#4a78c8"/>
<path d="M686.4,471.4 H688.4 L691,469 V477 L688.4,474.6 H686.4 Z" fill="#d8d8d8"/><circle cx="693.2" cy="473" r="2.6" fill="#d02020"/><path d="M692,471.8 L694.4,474.2 M694.4,471.8 L692,474.2" stroke="#fff" stroke-width="0.6"/>
<text x="699.4" y="476.3" font-size="9.3" fill="#040a12" textLength="22" lengthAdjust="spacingAndGlyphs" >Sat O</text>
<text x="762" y="476.3" font-size="9.3" fill="#5c606c" textLength="24.5" lengthAdjust="spacingAndGlyphs" >12 AM</text>
<rect x="786.8" y="465.8" width="13.2" height="12.4" rx="1" fill="#d8202a"/><path d="M790.6,469.6 A3.9,3.9 0 1 0 796.2,469.6" fill="none" stroke="#fff" stroke-width="1.5" stroke-linecap="round"/><path d="M793.4,467.6 V472.4" stroke="#fff" stroke-width="1.5" stroke-linecap="round"/>
</g>
</svg>
</body></html>
